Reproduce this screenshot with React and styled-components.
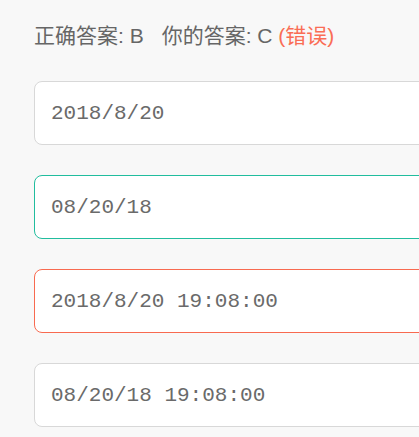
import React from 'react'
import styled, { createGlobalStyle } from 'styled-components'

const Global = createGlobalStyle`
    html, body {
        margin: 0;
        padding: 0;
        background: #f8f8f8;
        overflow: hidden;
    }
`;

const Page = styled.div`
    padding: 20px 0 0 34px;
    width: 560px;
    font-family: "Liberation Sans", "Noto Sans CJK SC", sans-serif;
`;

const Result = styled.div`
    font-size: 21px;
    line-height: 32px;
    color: #666;
    white-space: pre;
`;

const Answer = styled.span`
    margin-left: ${p => p.gap || 0}px;
`;

const Wrong = styled.span`
    color: #fa6d55;
`;

const Options = styled.div`
    margin-top: 29px;
    display: flex;
    flex-direction: column;
    gap: 30px;
`;

const borders = {
    normal: '#d8d8d8',
    right: '#21bd9e',
    wrong: '#f86a50',
}

const Option = styled.div`
    box-sizing: border-box;
    height: 64px;
    display: flex;
    align-items: center;
    padding: 0 16px;
    background: #fff;
    border: 1px solid ${p => borders[p.state || 'normal']};
    border-radius: 8px;
    font-family: "Liberation Mono", monospace;
    font-size: 21px;
    color: #6a6a6a;
`;

const options = [
    { text: '2018/8/20' },
    { text: '08/20/18', state: 'right' },
    { text: '2018/8/20 19:08:00', state: 'wrong' },
    { text: '08/20/18 19:08:00' },
]

const App = () => {
    return (
        <Page>
            <Global />
            <Result>
                <Answer>正确答案: B</Answer>
                <Answer gap={18}>你的答案: C <Wrong>(错误)</Wrong></Answer>
            </Result>
            <Options>
                {options.map((o, i) => (
                    <Option key={i} state={o.state}>{o.text}</Option>
                ))}
            </Options>
        </Page>
    )
}

export default App
